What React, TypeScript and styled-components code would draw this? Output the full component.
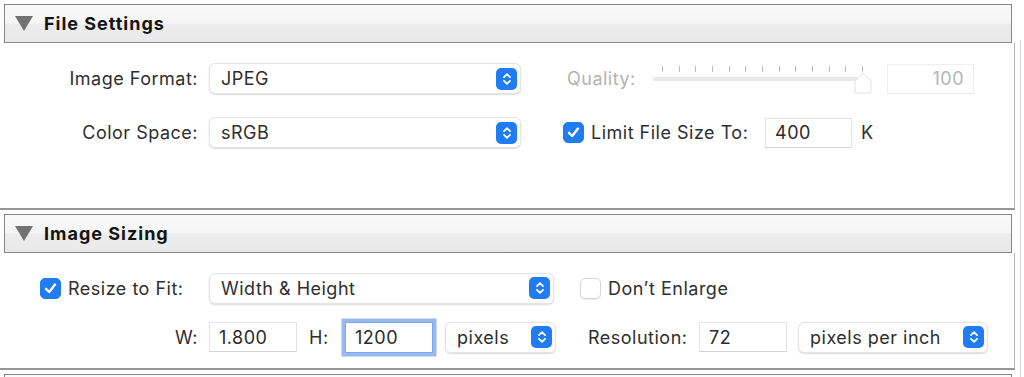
import styled, { createGlobalStyle } from "styled-components";

const GlobalStyle = createGlobalStyle`
  html, body {
    margin: 0;
    padding: 0;
    background: #ffffff;
    overflow: hidden;
  }
  body {
    font-family: Inter, "Liberation Sans", sans-serif;
    color: #2e2e2e;
  }
`;

const BLUE = "#1f7cf3";

const Stepper = () => (
  <StepperBox>
    <svg width="10" height="14" viewBox="0 0 10 14">
      <path
        d="M2 5.2 L5 2.2 L8 5.2 M2 8.8 L5 11.8 L8 8.8"
        fill="none"
        stroke="#fff"
        strokeWidth="1.8"
        strokeLinecap="round"
        strokeLinejoin="round"
      />
    </svg>
  </StepperBox>
);

const CheckBox = ({ checked }: { checked: boolean }) => (
  <Box $checked={checked}>
    {checked && (
      <svg width="15" height="15" viewBox="0 0 15 15">
        <path
          d="M3 7.8 L6.2 11 L12 3.6"
          fill="none"
          stroke="#fff"
          strokeWidth="2.4"
          strokeLinecap="round"
          strokeLinejoin="round"
        />
      </svg>
    )}
  </Box>
);

const Popup = ({ value, width, offset = 0 }: { value: string; width: number; offset?: number }) => (
  <PopupBox $width={width} $offset={offset}>
    <span>{value}</span>
    <Stepper />
  </PopupBox>
);

const QualitySlider = () => (
  <SliderWrap>
    <Ticks>
      {Array.from({ length: 13 }).map((_, i) => (
        <Tick key={i} />
      ))}
    </Ticks>
    <Track />
    <Thumb width="22" height="22" viewBox="0 0 22 22">
      <path
        d="M3 9 L11 1.5 L19 9 L19 19 Q19 21 17 21 L5 21 Q3 21 3 19 Z"
        fill="#ffffff"
        stroke="#e0e0e0"
        strokeWidth="1"
      />
    </Thumb>
  </SliderWrap>
);

const SectionHeader = ({ title }: { title: string }) => (
  <Header>
    <Disclosure />
    <Title>{title}</Title>
  </Header>
);

export default function App() {
  return (
    <>
      <GlobalStyle />
      <Page>
        <Panel>
          <SectionHeader title="File Settings" />
          <SectionBody $height={167} $gap={23}>
            <Row $height={31}>
              <LabelCell>Image Format:</LabelCell>
              <Popup value="JPEG" width={312} />
              <FixedLabel $width={80} $offset={46} $dim>
                Quality:
              </FixedLabel>
              <QualitySlider />
              <Field $width={87} $offset={8} $align="right" $dim>
                100
              </Field>
            </Row>
            <Row $height={31}>
              <LabelCell>Color Space:</LabelCell>
              <Popup value="sRGB" width={312} />
              <CheckCell $offset={42}>
                <CheckBox checked />
                <FixedLabel $width={174}>Limit File Size To:</FixedLabel>
              </CheckCell>
              <Field $width={87}>400</Field>
              <FixedLabel $width={20} $offset={9}>
                K
              </FixedLabel>
            </Row>
          </SectionBody>

          <SectionHeader title="Image Sizing" />
          <SectionBody $height={117} $gap={19}>
            <Row $height={30}>
              <CheckCell $width={209} $pad={40}>
                <CheckBox checked />
                <span>Resize to Fit:</span>
              </CheckCell>
              <Popup value="Width &amp; Height" width={345} />
              <CheckCell $offset={26}>
                <CheckBox checked={false} />
                <span>Don’t Enlarge</span>
              </CheckCell>
            </Row>
            <Row $height={30}>
              <LabelCell>W:</LabelCell>
              <Field $width={88}>1.800</Field>
              <FixedLabel $width={36} $offset={12}>
                H:
              </FixedLabel>
              <Field $width={88} $focused>
                1200
              </Field>
              <Popup value="pixels" width={111} offset={12} />
              <FixedLabel $width={111} $offset={32}>
                Resolution:
              </FixedLabel>
              <Field $width={88}>72</Field>
              <Popup value="pixels per inch" width={190} offset={11} />
            </Row>
          </SectionBody>

          <Header />
        </Panel>
        <Gutter />
      </Page>
    </>
  );
}

const Page = styled.div`
  display: flex;
  width: 1024px;
  height: 377px;
  overflow: hidden;
`;

const Panel = styled.div`
  width: 1015px;
  flex-shrink: 0;
`;

const Gutter = styled.div`
  flex: 1;
  margin: 40px 0 0 5px;
  border-left: 1px solid #d6d6d6;
`;

const Header = styled.div`
  box-sizing: border-box;
  height: 39px;
  margin: 4px 3px 0 4px;
  display: flex;
  align-items: center;
  border: 1px solid #858585;
  background: linear-gradient(
    to bottom,
    #f9f9f9 0%,
    #f5f5f5 48%,
    #ececec 52%,
    #e9e9e9 100%
  );
`;

const Disclosure = styled.div`
  width: 0;
  height: 0;
  margin-left: 10px;
  border-left: 9px solid transparent;
  border-right: 9px solid transparent;
  border-top: 15px solid #727272;
`;

const Title = styled.span`
  margin-left: 11px;
  font-size: 18px;
  font-weight: 700;
  letter-spacing: 1px;
  color: #141414;
`;

const SectionBody = styled.div<{ $height: number; $gap: number }>`
  box-sizing: border-box;
  height: ${({ $height }) => $height}px;
  padding-top: 20px;
  display: flex;
  flex-direction: column;
  gap: ${({ $gap }) => $gap}px;
  border-right: 1px solid #b4b4b4;
  border-bottom: 2px solid #959595;
`;

const Row = styled.div<{ $height: number }>`
  display: flex;
  align-items: center;
  height: ${({ $height }) => $height}px;
  font-size: 18px;
  letter-spacing: 0.5px;
`;

const LabelCell = styled.div`
  width: 198px;
  margin-right: 11px;
  text-align: right;
  flex-shrink: 0;
`;

const CheckCell = styled.div<{ $width?: number; $pad?: number; $offset?: number }>`
  display: flex;
  align-items: center;
  gap: 7px;
  flex-shrink: 0;
  box-sizing: border-box;
  width: ${({ $width }) => ($width ? `${$width}px` : "auto")};
  padding-left: ${({ $pad }) => $pad ?? 0}px;
  margin-left: ${({ $offset }) => $offset ?? 0}px;
`;

const FixedLabel = styled.span<{ $width: number; $offset?: number; $dim?: boolean }>`
  width: ${({ $width }) => $width}px;
  margin-left: ${({ $offset }) => $offset ?? 0}px;
  flex-shrink: 0;
  color: ${({ $dim }) => ($dim ? "#b3b3b3" : "inherit")};
  white-space: nowrap;
`;

const PopupBox = styled.div<{ $width: number; $offset: number }>`
  box-sizing: border-box;
  width: ${({ $width }) => $width}px;
  height: 31px;
  margin-left: ${({ $offset }) => $offset}px;
  flex-shrink: 0;
  display: flex;
  align-items: center;
  justify-content: space-between;
  padding: 0 3px 0 11px;
  background: #ffffff;
  border: 1px solid #e4e4e4;
  border-radius: 6px;
  box-shadow: 0 1px 1.5px rgba(0, 0, 0, 0.14);
  white-space: nowrap;
`;

const StepperBox = styled.div`
  width: 21px;
  height: 22px;
  border-radius: 5px;
  background: ${BLUE};
  display: flex;
  align-items: center;
  justify-content: center;
`;

const Box = styled.div<{ $checked: boolean }>`
  box-sizing: border-box;
  width: 21px;
  height: 21px;
  flex-shrink: 0;
  border-radius: 5px;
  display: flex;
  align-items: center;
  justify-content: center;
  background: ${({ $checked }) => ($checked ? BLUE : "#ffffff")};
  border: 1px solid ${({ $checked }) => ($checked ? BLUE : "#d6d6d6")};
  box-shadow: ${({ $checked }) =>
    $checked ? "none" : "0 1px 1px rgba(0,0,0,0.08)"};
`;

const Field = styled.div<{
  $width: number;
  $offset?: number;
  $align?: "left" | "right";
  $dim?: boolean;
  $focused?: boolean;
}>`
  box-sizing: border-box;
  width: ${({ $width }) => $width}px;
  height: ${({ $focused }) => ($focused ? 31 : 30)}px;
  flex-shrink: 0;
  display: flex;
  align-items: center;
  justify-content: ${({ $align }) => ($align === "right" ? "flex-end" : "flex-start")};
  padding: 0 9px;
  margin-left: ${({ $offset }) => $offset ?? 0}px;
  background: #ffffff;
  color: ${({ $dim }) => ($dim ? "#b5b5b5" : "#2a2a2a")};
  border: 1px solid ${({ $dim, $focused }) => ($focused ? "#7ea6ec" : $dim ? "#efefef" : "#e4e4e4")};
  border-bottom-color: ${({ $dim, $focused }) => ($focused ? "#7ea6ec" : $dim ? "#e8e8e8" : "#d2d2d2")};
  box-shadow: ${({ $focused }) => ($focused ? "0 0 0 3.5px #98b8f0" : "none")};
`;

const SliderWrap = styled.div`
  position: relative;
  width: 232px;
  height: 31px;
  flex-shrink: 0;
`;

const Ticks = styled.div`
  position: absolute;
  left: 15px;
  width: 201px;
  top: 3px;
  display: flex;
  justify-content: space-between;
`;

const Tick = styled.div`
  width: 1px;
  height: 6px;
  background: #bdbdbd;
`;

const Track = styled.div`
  position: absolute;
  left: 6px;
  width: 212px;
  top: 14px;
  height: 4px;
  border-radius: 2px;
  background: #e8e8e8;
`;

const Thumb = styled.svg`
  position: absolute;
  left: 205px;
  top: 9px;
`;
